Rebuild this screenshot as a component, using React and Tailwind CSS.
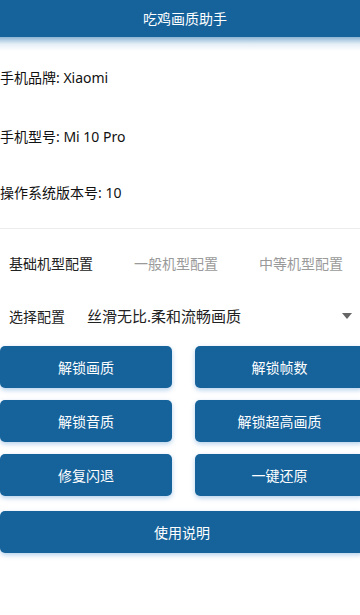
import { useState } from "react";

const font = { fontFamily: '"Noto Sans", "Noto Sans CJK SC", sans-serif' };

const actions = [
  ["解锁画质", "解锁帧数"],
  ["解锁音质", "解锁超高画质"],
  ["修复闪退", "一键还原"],
];

function ActionButton({ label }) {
  return (
    <button className="h-[42px] rounded-[5px] bg-[#16639b] text-white text-[14px] shadow-[0_2px_5px_rgba(40,120,200,0.35)]">
      {label}
    </button>
  );
}

export default function App() {
  const [tab, setTab] = useState(0);
  const tabs = ["基础机型配置", "一般机型配置", "中等机型配置"];

  return (
    <div className="w-[360px] h-[615px] overflow-hidden bg-white" style={font}>
      <div className="h-[37px] bg-[#16639b] flex items-center justify-center pl-[10px]">
        <span className="text-white text-[14px]">吃鸡画质助手</span>
      </div>
      <div className="h-[14px] bg-gradient-to-b from-[#8db5d3] via-[#e4eef6] to-white" />

      <div className="flex flex-col text-[14px] text-[#111] border-b border-[#ececec]">
        <div className="h-[55px] flex items-center pb-[2px]">手机品牌: Xiaomi</div>
        <div className="h-[60px] flex items-center">手机型号: Mi 10 Pro</div>
        <div className="h-[55px] flex items-center pb-[2px]">操作系统版本号: 10</div>
        <div className="h-[7px]" />
      </div>

      <div className="grid grid-cols-[125px_125px_110px] items-center h-[62px] pt-[6px] text-[14px]">
        {tabs.map((t, i) => (
          <button
            key={t}
            onClick={() => setTab(i)}
            className={`text-left pl-[9px] whitespace-nowrap ${tab === i ? "text-[#222]" : "text-[#9a9a9a]"}`}
          >
            {t}
          </button>
        ))}
      </div>

      <div className="flex items-center h-[36px] mt-[7px] pl-[9px] pr-[6px]">
        <span className="text-[14px] text-[#222]">选择配置</span>
        <span className="ml-[22px] text-[15px] text-[#222] flex-1">丝滑无比.柔和流畅画质</span>
        <svg width="10" height="6" viewBox="0 0 10 6" className="mr-[2px]">
          <path d="M0 0 L10 0 L5 6 Z" fill="#666" />
        </svg>
      </div>

      <div className="w-[364px] flex flex-col gap-[12px] mt-[12px]">
        {actions.map((row, i) => (
          <div key={i} className="grid grid-cols-[172px_1fr] gap-[23px]">
            <ActionButton label={row[0]} />
            <ActionButton label={row[1]} />
          </div>
        ))}
        <div className="mt-[3px] flex flex-col">
          <ActionButton label="使用说明" />
        </div>
      </div>
    </div>
  );
}
